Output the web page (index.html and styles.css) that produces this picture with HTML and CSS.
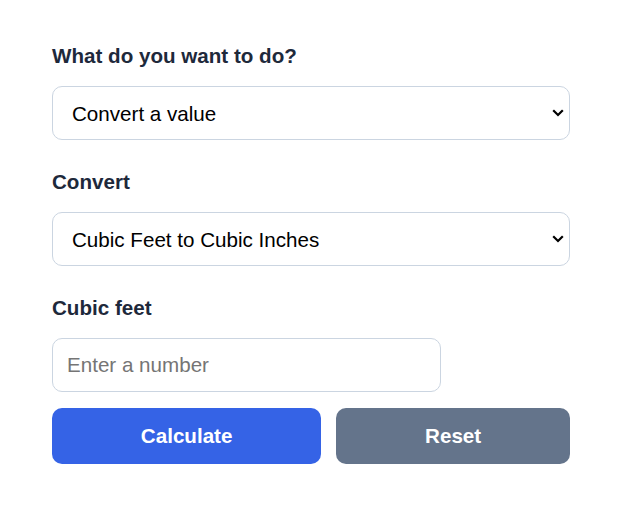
FILE: index.html
```html
<!DOCTYPE html>
<html>
<head>
<meta charset="UTF-8">
<title>Volume converter</title>
<link rel="stylesheet" href="styles.css">
</head>
<body>
  <form class="calc" onsubmit="return false;">
    <div class="field">
      <label class="field-label" for="mode">What do you want to do?</label>
      <select class="field-select" id="mode">
        <option>Convert a value</option>
        <option>Compare values</option>
      </select>
    </div>
    <div class="field">
      <label class="field-label" for="unit">Convert</label>
      <select class="field-select" id="unit">
        <option>Cubic Feet to Cubic Inches</option>
        <option>Cubic Inches to Cubic Feet</option>
      </select>
    </div>
    <div class="field field-last">
      <label class="field-label" for="amount">Cubic feet</label>
      <input class="field-input" id="amount" type="text" placeholder="Enter a number">
    </div>
    <div class="actions">
      <button class="btn btn-primary" type="submit">Calculate</button>
      <button class="btn btn-muted" type="reset">Reset</button>
    </div>
  </form>
</body>
</html>
```

FILE: styles.css
```css
* {
  box-sizing: border-box;
}
body {
  margin: 0;
  background: #fff;
  font-family: "Liberation Sans", Arial, sans-serif;
}
.calc {
  width: 518px;
  margin: 44px 0 0 52px;
}
.field {
  display: flex;
  flex-direction: column;
  margin-bottom: 30px;
}
.field-last {
  margin-bottom: 16px;
}
.field-label {
  font-size: 20.6px;
  line-height: 24px;
  font-weight: bold;
  color: #1e293b;
  margin-bottom: 18px;
}
.field-select,
.field-input {
  font-family: inherit;
  font-size: 20.6px;
  line-height: 24px;
  height: 54px;
  border: 1px solid #cbd5e1;
  border-radius: 10px;
  background-color: #fff;
  color: #000;
}
.field-select {
  appearance: none;
  -webkit-appearance: none;
  padding: 2px 30px 0 19px;
  /* chevron drawn as an svg so it looks the same everywhere */
  background-image: url("data:image/svg+xml;utf8,<svg xmlns='http://www.w3.org/2000/svg' width='12' height='8' viewBox='0 0 12 8'><path d='M1.2 1.2 6 6l4.8-4.8' fill='none' stroke='black' stroke-width='2.2'/></svg>");
  background-repeat: no-repeat;
  background-position: right 5px center;
}
.field-input {
  width: 75%;
  padding: 0 14px;
}
.field-input::placeholder {
  color: #757575;
}
.actions {
  display: flex;
  gap: 15px;
}
.btn {
  flex: 1 1 auto;
  height: 56px;
  border: 0;
  border-radius: 10px;
  font-family: inherit;
  font-size: 20.6px;
  font-weight: bold;
  color: #fff;
  padding: 0 16px;
}
.btn-primary {
  background: #3563e6;
}
.btn-muted {
  background: #64748b;
}
```
